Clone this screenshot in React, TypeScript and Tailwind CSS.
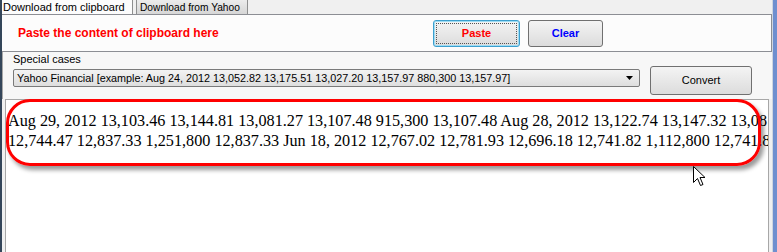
import React from "react";

const ui = { fontFamily: '"Liberation Sans", Arial, sans-serif' };
const serif = { fontFamily: '"Liberation Serif", "Times New Roman", serif' };

const line1 =
  "Aug 29, 2012 13,103.46 13,144.81 13,081.27 13,107.48 915,300 13,107.48 Aug 28, 2012 13,122.74 13,147.32 13,081.27 13,107.48";
const line2 =
  "12,744.47 12,837.33 1,251,800 12,837.33 Jun 18, 2012 12,767.02 12,781.93 12,696.18 12,741.82 1,112,800 12,741.82";

function Cursor() {
  return (
    <svg width="13" height="21" viewBox="0 0 13 21" className="absolute left-[693px] top-[166px]">
      <path
        d="M0.5 0.5 L0.5 16.5 L4.5 12.5 L7.5 19.5 L10 18.5 L7 11.5 L12 11.5 Z"
        fill="#fff"
        stroke="#000"
        strokeWidth="1"
        strokeLinejoin="miter"
      />
    </svg>
  );
}

export default function App() {
  return (
    <div className="relative flex h-[252px] w-[777px] overflow-hidden bg-[#f0f0f0] text-[11px] text-black" style={ui}>
      <div className="w-[2px] bg-[#34465a]" />
      <div className="flex w-[770px] flex-col">
        {/* tab strip */}
        <div className="flex h-[14px] items-end bg-[#f0f0f0]">
          <div className="flex h-[14px] w-[131px] items-end whitespace-nowrap border-r border-[#8e8f8f] bg-[#fcfcfc] pl-[1px] leading-[13px]">
            Download from clipboard
          </div>
          <div className="ml-[3px] flex h-[14px] w-[112px] items-end overflow-hidden whitespace-nowrap border-x border-[#8e8f8f] bg-gradient-to-b from-[#ececec] to-[#d6d6d6] pl-[3px] text-[10.2px] leading-[13px]">
            Download from Yahoo
          </div>
        </div>

        {/* tab page */}
        <div className="flex h-[38px] items-center border-y border-r border-[#8c8e94] bg-[#fcfcfc] pr-[2px]">
          <span className="ml-[16px] text-[12px] font-bold text-[#ff0000]">Paste the content of clipboard here</span>
          <div className="ml-auto mr-[166px] flex gap-[8px]">
            <button className="flex h-[27px] w-[87px] items-center justify-center rounded-[3px] border border-[#3c9fce] bg-gradient-to-b from-[#f4f4f4] to-[#dcdcdc] font-bold text-[#ff0000] shadow-[inset_0_0_0_1px_#9ddcf4]">
              <span className="flex h-[21px] w-[81px] items-center justify-center border border-dotted border-[#555]">Paste</span>
            </button>
            <button className="flex h-[27px] w-[75px] items-center justify-center rounded-[3px] border border-[#707070] bg-gradient-to-b from-[#f4f4f4] to-[#dcdcdc] font-bold text-[#0000ff]">
              Clear
            </button>
          </div>
        </div>

        {/* special cases */}
        <div className="flex h-[47px] flex-col border-l border-[#a7a7a7] bg-[#f7f7f7] pl-[2px] pr-[4px]">
          <div className="ml-[8px] mt-[1px] leading-[13px]">Special cases</div>
          <div className="mt-[2px] flex items-start">
            <div className="ml-[8px] mt-[1px] flex h-[18px] w-[627px] items-center rounded-[2px] border border-[#7a7a7a] bg-gradient-to-b from-[#f3f3f3] to-[#dedede] pl-[3px]">
              <span className="whitespace-nowrap text-[10.8px]">
                Yahoo Financial [example: Aug 24, 2012 13,052.82 13,175.51 13,027.20 13,157.97 880,300 13,157.97]
              </span>
              <svg width="7" height="4" viewBox="0 0 7 4" className="ml-auto mr-[6px]">
                <path d="M0 0 H7 L3.5 4 Z" fill="#000" />
              </svg>
            </div>
            <button className="ml-[10px] mt-[-2px] flex h-[29px] w-[102px] items-center justify-center rounded-[3px] border border-[#707070] bg-gradient-to-b from-[#f4f4f4] to-[#dcdcdc]">
              Convert
            </button>
          </div>
        </div>

        {/* text area */}
        <div className="ml-[3px] mr-[3px] flex-1 overflow-hidden border-l border-r border-t border-[#a7a7a7] bg-white pl-[2px] pt-[11px]">
          <div className="w-[761px] overflow-hidden whitespace-nowrap text-[16.2px] leading-[20px]" style={serif}>
            <div>{line1}</div>
            <div>{line2}</div>
          </div>
        </div>
      </div>
      <div className="w-[5px] border-l border-[#cfd6e0] bg-[#6f8fcf]" />

      {/* annotation */}
      <div className="absolute left-[6px] top-[99px] h-[67px] w-[755px] rounded-[24px] border-[3px] border-[#ff0000] shadow-[3px_4px_4px_rgba(0,0,0,0.4)]" />
      <Cursor />
    </div>
  );
}
